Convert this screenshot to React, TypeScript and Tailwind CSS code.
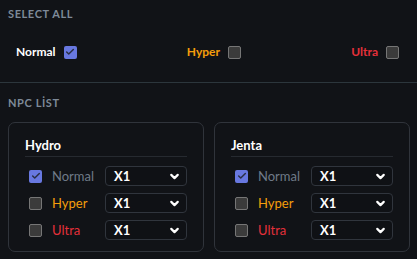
import { ChevronDown, Check } from 'lucide-react'

type Tier = 'Normal' | 'Hyper' | 'Ultra'

const tierCls: Record<Tier, string> = {
  Normal: 'text-[#6f7a88]',
  Hyper: 'text-[#f59e0b]',
  Ultra: 'text-[#e5303a]',
}

const topCls: Record<Tier, string> = {
  Normal: 'text-white',
  Hyper: 'text-[#f59e0b]',
  Ultra: 'text-[#e5303a]',
}

function Box({ checked }: { checked: boolean }) {
  if (checked) {
    return (
      <span className="flex h-[13px] w-[13px] shrink-0 items-center justify-center rounded-[2px] bg-[#6878e0]">
        <Check size={10} strokeWidth={3.5} className="text-[#2a2f45]" aria-hidden />
      </span>
    )
  }
  return (
    <span className="block h-[13px] w-[13px] shrink-0 rounded-[2px] border border-[#767676] bg-[#3b3b3b]" />
  )
}

function Select() {
  return (
    <div className="flex h-[20px] w-[82px] items-center justify-between rounded-[4px] border border-[#30353d] bg-[#0f1115] pl-[8px] pr-[5px]">
      <span className="text-[13px] font-bold leading-none text-white">X1</span>
      <ChevronDown size={13} strokeWidth={4} className="text-white" aria-hidden />
    </div>
  )
}

function NpcCard({ name, checked }: { name: string; checked: Tier[] }) {
  const tiers: Tier[] = ['Normal', 'Hyper', 'Ultra']
  return (
    <div className="flex h-[130px] flex-1 flex-col rounded-[7px] border border-[#30343b] px-[16px] pt-[12px]">
      <div className="h-[20px] text-[13px] font-bold leading-[20px] text-white">{name}</div>
      <div className="mt-[1px] h-px w-full bg-[#262a30]" />
      <div className="mt-[9px] flex flex-col gap-[7px]">
        {tiers.map((t) => (
          <div key={t} className="flex h-[20px] items-center">
            <div className="flex w-[80px] items-center gap-[10px] pl-[4px]">
              <Box checked={checked.includes(t)} />
              <span className={`text-[13px] leading-none ${tierCls[t]}`}>{t}</span>
            </div>
            <Select />
          </div>
        ))}
      </div>
    </div>
  )
}

export default function App() {
  const tiers: Tier[] = ['Normal', 'Hyper', 'Ultra']
  return (
    <div
      className="h-[259px] w-[417px] overflow-hidden bg-[#111317]"
      style={{ fontFamily: 'Lato, "Noto Sans", sans-serif' }}
    >
      <div className="px-2 pt-[6px]">
        <div className="h-[16px] text-[11px] font-bold uppercase leading-[16px] tracking-[0.6px] text-[#7e8a98]">
          Select All
        </div>
      </div>
      <div className="mt-[22px] flex h-[16px] items-center justify-between pl-4 pr-[18px]">
        {tiers.map((t) => (
          <div key={t} className="flex items-center gap-[8px]">
            <span className={`text-[12px] font-bold leading-none ${topCls[t]}`}>{t}</span>
            <Box checked={t === 'Normal'} />
          </div>
        ))}
      </div>
      <div className="mt-[22px] h-px w-full bg-[#2c363c]" />
      <div className="px-2 pt-[12px]">
        <div className="h-[16px] text-[11px] font-bold leading-[16px] tracking-[0.6px] text-[#7e8a98]">
          NPC LİST
        </div>
        <div className="mt-[11px] flex gap-[10px]">
          <NpcCard name="Hydro" checked={['Normal']} />
          <NpcCard name="Jenta" checked={['Normal']} />
        </div>
      </div>
    </div>
  )
}
